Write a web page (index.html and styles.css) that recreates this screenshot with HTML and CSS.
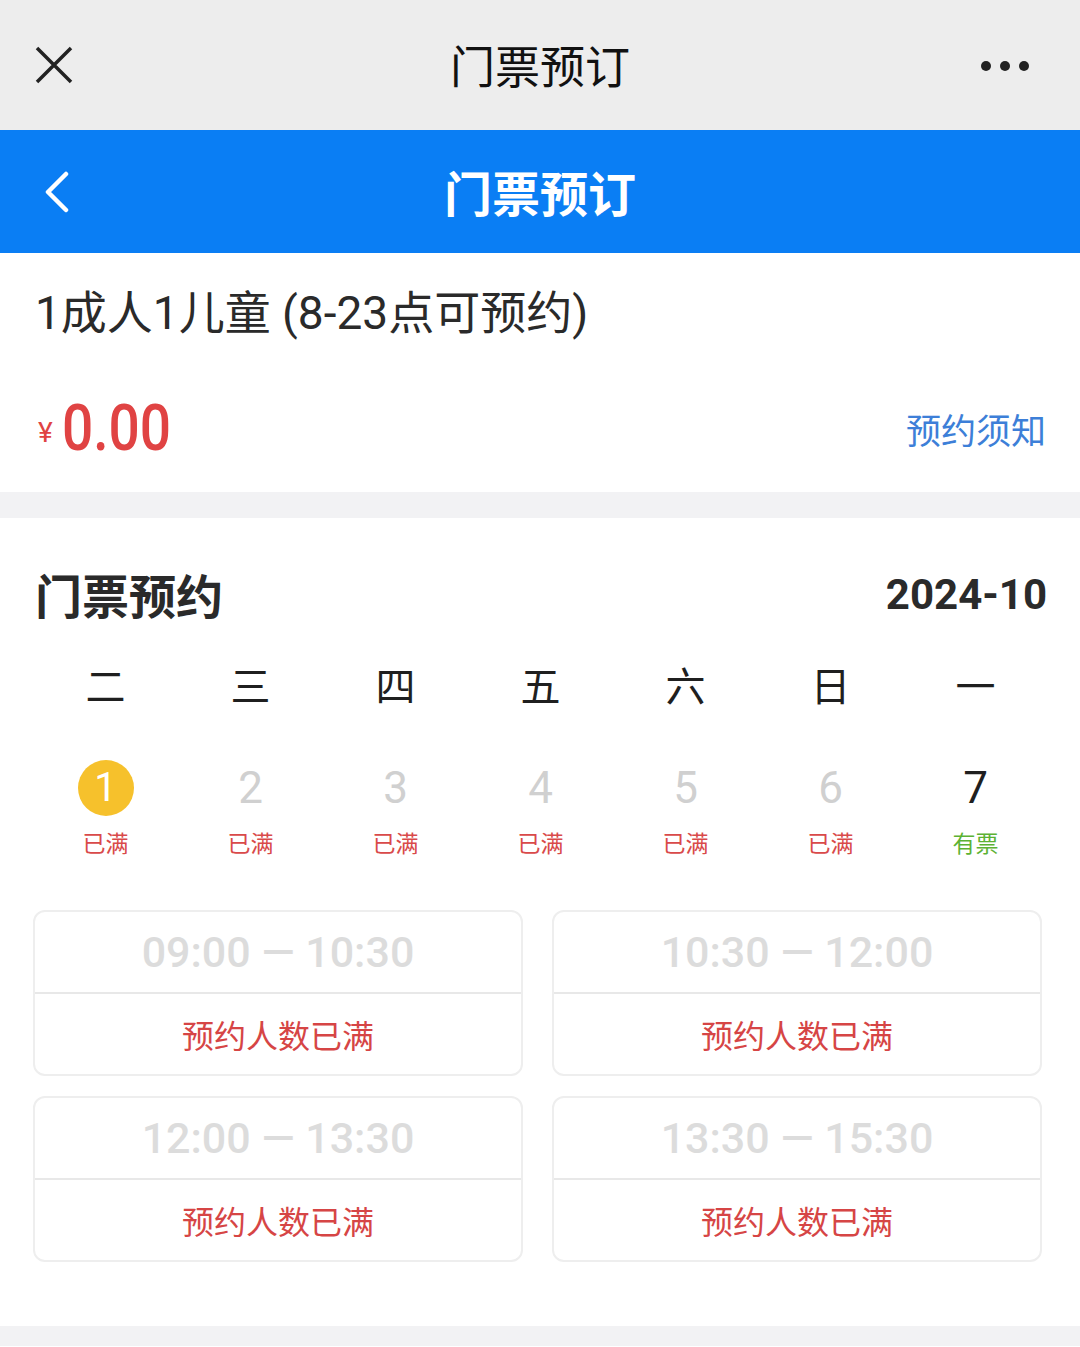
FILE: index.html
```html
<!DOCTYPE html>
<html lang="zh-CN">
<head>
	<meta charset="UTF-8">
	<title>门票预订</title>
	<link rel="stylesheet" href="styles.css">
</head>
<body>
	<div class="topbar">
		<svg class="icon-close" width="40" height="40" viewBox="0 0 40 40">
			<path d="M3 3 L37 37 M37 3 L3 37" stroke="#222" stroke-width="3.5" fill="none"/>
		</svg>
		<div class="topbar-title">门票预订</div>
		<svg class="icon-more" width="50" height="12" viewBox="0 0 50 12">
			<circle cx="6" cy="6" r="5" fill="#222"/>
			<circle cx="25" cy="6" r="5" fill="#222"/>
			<circle cx="44" cy="6" r="5" fill="#222"/>
		</svg>
	</div>

	<div class="navbar">
		<svg class="icon-back" width="30" height="42" viewBox="0 0 30 42">
			<path d="M24 3 L6 21 L24 39" stroke="#fff" stroke-width="4.5" fill="none" stroke-linecap="round" stroke-linejoin="round"/>
		</svg>
		<div class="navbar-title">门票预订</div>
	</div>

	<div class="ticket">
		<div class="ticket-name">1成人1儿童 (8-23点可预约)</div>
		<div class="ticket-row">
			<div class="price"><span class="yen">¥</span><span class="amount">0.00</span></div>
			<div class="notice">预约须知</div>
		</div>
	</div>

	<div class="booking">
		<div class="booking-head">
			<div class="booking-title">门票预约</div>
			<div class="month">2024-10</div>
		</div>

		<div class="week">
			<div>二</div><div>三</div><div>四</div><div>五</div><div>六</div><div>日</div><div>一</div>
		</div>

		<div class="days">
			<div class="day">
				<div class="num active">1</div>
				<div class="state full">已满</div>
			</div>
			<div class="day">
				<div class="num off">2</div>
				<div class="state full">已满</div>
			</div>
			<div class="day">
				<div class="num off">3</div>
				<div class="state full">已满</div>
			</div>
			<div class="day">
				<div class="num off">4</div>
				<div class="state full">已满</div>
			</div>
			<div class="day">
				<div class="num off">5</div>
				<div class="state full">已满</div>
			</div>
			<div class="day">
				<div class="num off">6</div>
				<div class="state full">已满</div>
			</div>
			<div class="day">
				<div class="num">7</div>
				<div class="state ok">有票</div>
			</div>
		</div>

		<div class="slots">
			<div class="slot">
				<div class="slot-time">09:00 — 10:30</div>
				<div class="slot-state">预约人数已满</div>
			</div>
			<div class="slot">
				<div class="slot-time">10:30 — 12:00</div>
				<div class="slot-state">预约人数已满</div>
			</div>
			<div class="slot">
				<div class="slot-time">12:00 — 13:30</div>
				<div class="slot-state">预约人数已满</div>
			</div>
			<div class="slot">
				<div class="slot-time">13:30 — 15:30</div>
				<div class="slot-state">预约人数已满</div>
			</div>
		</div>
	</div>

	<div class="bottom-gap"></div>
</body>
</html>
```

FILE: styles.css
```css
* {
	margin: 0;
	padding: 0;
	box-sizing: border-box;
}
body {
	width: 1080px;
	background: #fff;
	font-family: "Noto Sans CJK SC", Roboto, "Noto Sans", sans-serif;
	color: #222;
}

/* 顶部灰色栏 */
.topbar {
	height: 130px;
	background: #ededed;
	display: flex;
	align-items: center;
	justify-content: space-between;
	padding: 0 50px 0 34px;
	position: relative;
}
.icon-close {
	width: 40px;
	height: 40px;
}
.topbar-title {
	position: absolute;
	left: 0;
	right: 0;
	text-align: center;
	font-size: 45px;
	line-height: 130px;
	color: #111;
	pointer-events: none;
}
.icon-more {
	margin-top: 2px;
}

/* 蓝色导航 */
.navbar {
	height: 123px;
	background: #0a7ef4;
	display: flex;
	align-items: center;
	padding-left: 42px;
	position: relative;
}
.navbar-title {
	position: absolute;
	left: 0;
	right: 0;
	text-align: center;
	font-size: 48px;
	font-weight: bold;
	color: #fff;
	line-height: 123px;
}

/* 门票信息 */
.ticket {
	height: 265px;
	padding: 28px 35px 0 35px;
	border-bottom: 26px solid #f2f2f4;
}
.ticket-name {
	font-size: 46px;
	line-height: 64px;
	color: #2a2a2a;
	font-family: Roboto, "Noto Sans CJK SC", sans-serif;
}
.ticket-row {
	display: flex;
	justify-content: space-between;
	align-items: center;
	margin-top: 44px;
}
.price {
	color: #e04343;
	font-family: Roboto, sans-serif;
	line-height: 80px;
	display: flex;
	align-items: baseline;
}
.yen {
	font-size: 28px;
	margin: 0 9px 0 3px;
	position: relative;
	top: -8px;
}
.amount {
	display: inline-block;
	font-size: 64px;
	font-weight: 500;
	transform: scaleX(0.86);
	transform-origin: left center;
}
.notice {
	color: #3d7fd8;
	font-size: 35px;
	margin-right: -1px;
	margin-bottom: 14px;
}

/* 门票预约 */
.booking {
	padding: 46px 33px 64px 33px;
}
.booking-head {
	display: flex;
	justify-content: space-between;
	align-items: center;
	padding: 0 0 0 2px;
}
.booking-title {
	font-size: 47px;
	font-weight: bold;
	color: #2a2a2a;
	line-height: 60px;
}
.month {
	font-family: Roboto, sans-serif;
	font-size: 42px;
	font-weight: bold;
	color: #2a2a2a;
}

.week {
	display: grid;
	grid-template-columns: repeat(7, 145px);
	margin-top: 30px;
	text-align: center;
	font-size: 40px;
	line-height: 60px;
	color: #1f1f1f;
}

.days {
	display: grid;
	grid-template-columns: repeat(7, 145px);
	margin-top: 46px;
}
.day {
	display: flex;
	flex-direction: column;
	align-items: center;
}
.num {
	width: 56px;
	height: 56px;
	border-radius: 50%;
	font-family: Roboto, sans-serif;
	font-size: 44px;
	line-height: 56px;
	text-align: center;
	color: #1f1f1f;
}
.num.off {
	color: #d0d0d0;
}
.num.active {
	background: #f6c12c;
	color: #fff;
	font-size: 40px;
}
.state {
	font-size: 23px;
	line-height: 34px;
	margin-top: 9px;
}
.state.full {
	color: #d94a4a;
}
.state.ok {
	color: #5cb233;
}

/* 时间段 */
.slots {
	display: grid;
	grid-template-columns: 490px 490px;
	column-gap: 29px;
	row-gap: 20px;
	margin-top: 51px;
}
.slot {
	border: 2px solid #eeeeee;
	border-radius: 12px;
	height: 166px;
	display: flex;
	flex-direction: column;
}
.slot-time {
	height: 82px;
	border-bottom: 2px solid #e8e8e8;
	text-align: center;
	line-height: 80px;
	font-family: Roboto, sans-serif;
	font-size: 43px;
	font-weight: 500;
	color: #dcdcdc;
}
.slot-state {
	flex: 1;
	text-align: center;
	line-height: 80px;
	font-size: 32px;
	color: #d64545;
}

.bottom-gap {
	height: 20px;
	background: #f2f2f4;
}
```
